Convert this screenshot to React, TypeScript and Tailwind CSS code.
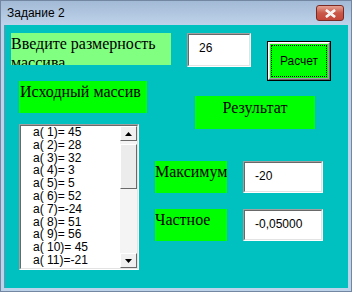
const serif = { fontFamily: '"Liberation Serif", "Times New Roman", serif' };

const items = [
  "a( 1)= 45",
  "a( 2)= 28",
  "a( 3)= 32",
  "a( 4)= 3",
  "a( 5)= 5",
  "a( 6)= 52",
  "a( 7)=-24",
  "a( 8)= 51",
  "a( 9)= 56",
  "a( 10)= 45",
  "a( 11)=-21",
];

function Sunken({ className, children }: { className: string; children?: React.ReactNode }) {
  return (
    <div className={`border border-t-[#a0a0a0] border-l-[#a0a0a0] border-b-white border-r-white ${className}`}>
      <div className="h-full w-full border border-t-[#696969] border-l-[#696969] border-b-[#e3e3e3] border-r-[#e3e3e3] bg-white">
        {children}
      </div>
    </div>
  );
}

function Arrow({ up }: { up?: boolean }) {
  return (
    <div className="flex h-[15px] w-[17px] items-center justify-center border border-t-white border-l-white border-b-[#696969] border-r-[#696969] bg-[#f0f0f0]">
      <svg width="7" height="4" viewBox="0 0 7 4">
        <path d={up ? "M3.5 0 L7 4 L0 4 Z" : "M0 0 L7 0 L3.5 4 Z"} fill="#000" />
      </svg>
    </div>
  );
}

export default function App() {
  return (
    <div className="h-[292px] w-[352px] border border-[#7387a3] bg-[#bdd3ea]" style={{ fontFamily: '"Liberation Sans", Arial, sans-serif' }}>
      {/* заголовок окна */}
      <div className="relative flex h-[24px] items-center bg-gradient-to-b from-[#a3bad6] to-[#bed3ea] pl-[6px] text-[12px] text-black">
        Задание 2
        <div className="absolute left-[315px] top-[4px] flex h-[16px] w-[28px] items-center justify-center rounded-[3px] border border-[#7a2a22] bg-gradient-to-b from-[#e6a191] via-[#c9584a] to-[#c4473a]">
          <svg width="11" height="9" viewBox="0 0 11 9">
            <path d="M1 1 L10 8 M10 1 L1 8" stroke="#fff" strokeWidth="2.6" />
            <path d="M1 1 L10 8 M10 1 L1 8" stroke="#f2f2f2" strokeWidth="1.4" />
          </svg>
        </div>
      </div>

      {/* клиентская область формы */}
      <div className="ml-[3px] h-[263px] w-[344px] border-l border-[#6f8fb0] bg-[#00c0c0]">
        <div className="flex items-start">
          <div className="ml-[6px] mt-[8px] h-[32px] w-[160px] overflow-hidden bg-[#80ff80] text-[16px] leading-[19px] text-black" style={serif}>
            <div className="pt-[1px]">Введите размерность массива</div>
          </div>
          <Sunken className="ml-[16px] mt-[8px] h-[34px] w-[64px]">
            <div className="pl-[10px] pt-[4px] text-[12px] text-black">26</div>
          </Sunken>
          <div className="ml-[16px] mt-[16px] h-[40px] w-[64px] border border-black">
            <div className="h-full w-full border border-t-white border-l-white border-b-[#696969] border-r-[#696969]">
              <div className="h-full w-full border border-t-[#e3e3e3] border-l-[#e3e3e3] border-b-[#a0a0a0] border-r-[#a0a0a0] bg-[#00ff00] p-[1px]">
                <div className="flex h-full w-full items-center justify-center border border-dotted border-black text-[12px] text-black">
                  Расчет
                </div>
              </div>
            </div>
          </div>
        </div>

        <div className="flex items-start">
          <div className="ml-[14px] flex flex-col">
            <div className="h-[32px] w-[128px] bg-[#00ff00] pl-[1px] pt-[1px] text-[16px] leading-[19px] text-black" style={serif}>
              Исходный массив
            </div>
            <div className="mt-[11px] h-[146px] w-[120px] border border-t-[#a0a0a0] border-l-[#a0a0a0] border-b-white border-r-white">
              <div className="flex h-full w-full border border-t-[#696969] border-l-[#696969] border-b-[#e3e3e3] border-r-[#e3e3e3] bg-white">
                <div className="flex-1 overflow-hidden pl-[12px] text-[12px] leading-[12.8px] text-black">
                  {items.map((it) => (
                    <div key={it} className="whitespace-pre">{it}</div>
                  ))}
                </div>
                <div className="flex w-[17px] flex-col bg-[#f4f4f4]">
                  <Arrow up />
                  <div className="mt-[3px] h-[45px] w-[17px] border border-t-white border-l-white border-b-[#696969] border-r-[#696969] bg-[#ececec]" />
                  <div className="flex-1" />
                  <Arrow />
                </div>
              </div>
            </div>
          </div>

          <div className="ml-[8px] flex flex-col">
            <div className="ml-[40px] mt-[15px] flex h-[33px] w-[120px] justify-center bg-[#00ff00] pt-[2px] text-[16px] leading-[19px] text-black" style={serif}>
              Результат
            </div>
            <div className="mt-[32px] flex items-start">
              <div className="h-[32px] w-[72px] overflow-hidden whitespace-nowrap bg-[#00ff00] pt-[1px] text-[16px] leading-[19px] text-black" style={serif}>
                Максимум
              </div>
              <Sunken className="ml-[16px] h-[32px] w-[80px]">
                <div className="pl-[10px] pt-[4px] text-[12px] text-black">-20</div>
              </Sunken>
            </div>
            <div className="mt-[16px] flex items-start">
              <div className="h-[32px] w-[72px] overflow-hidden whitespace-nowrap bg-[#00ff00] pt-[1px] text-[16px] leading-[19px] text-black" style={serif}>
                Частное
              </div>
              <Sunken className="ml-[16px] h-[32px] w-[80px]">
                <div className="pl-[10px] pt-[4px] text-[12px] text-black">-0,05000</div>
              </Sunken>
            </div>
          </div>
        </div>
      </div>
    </div>
  );
}
